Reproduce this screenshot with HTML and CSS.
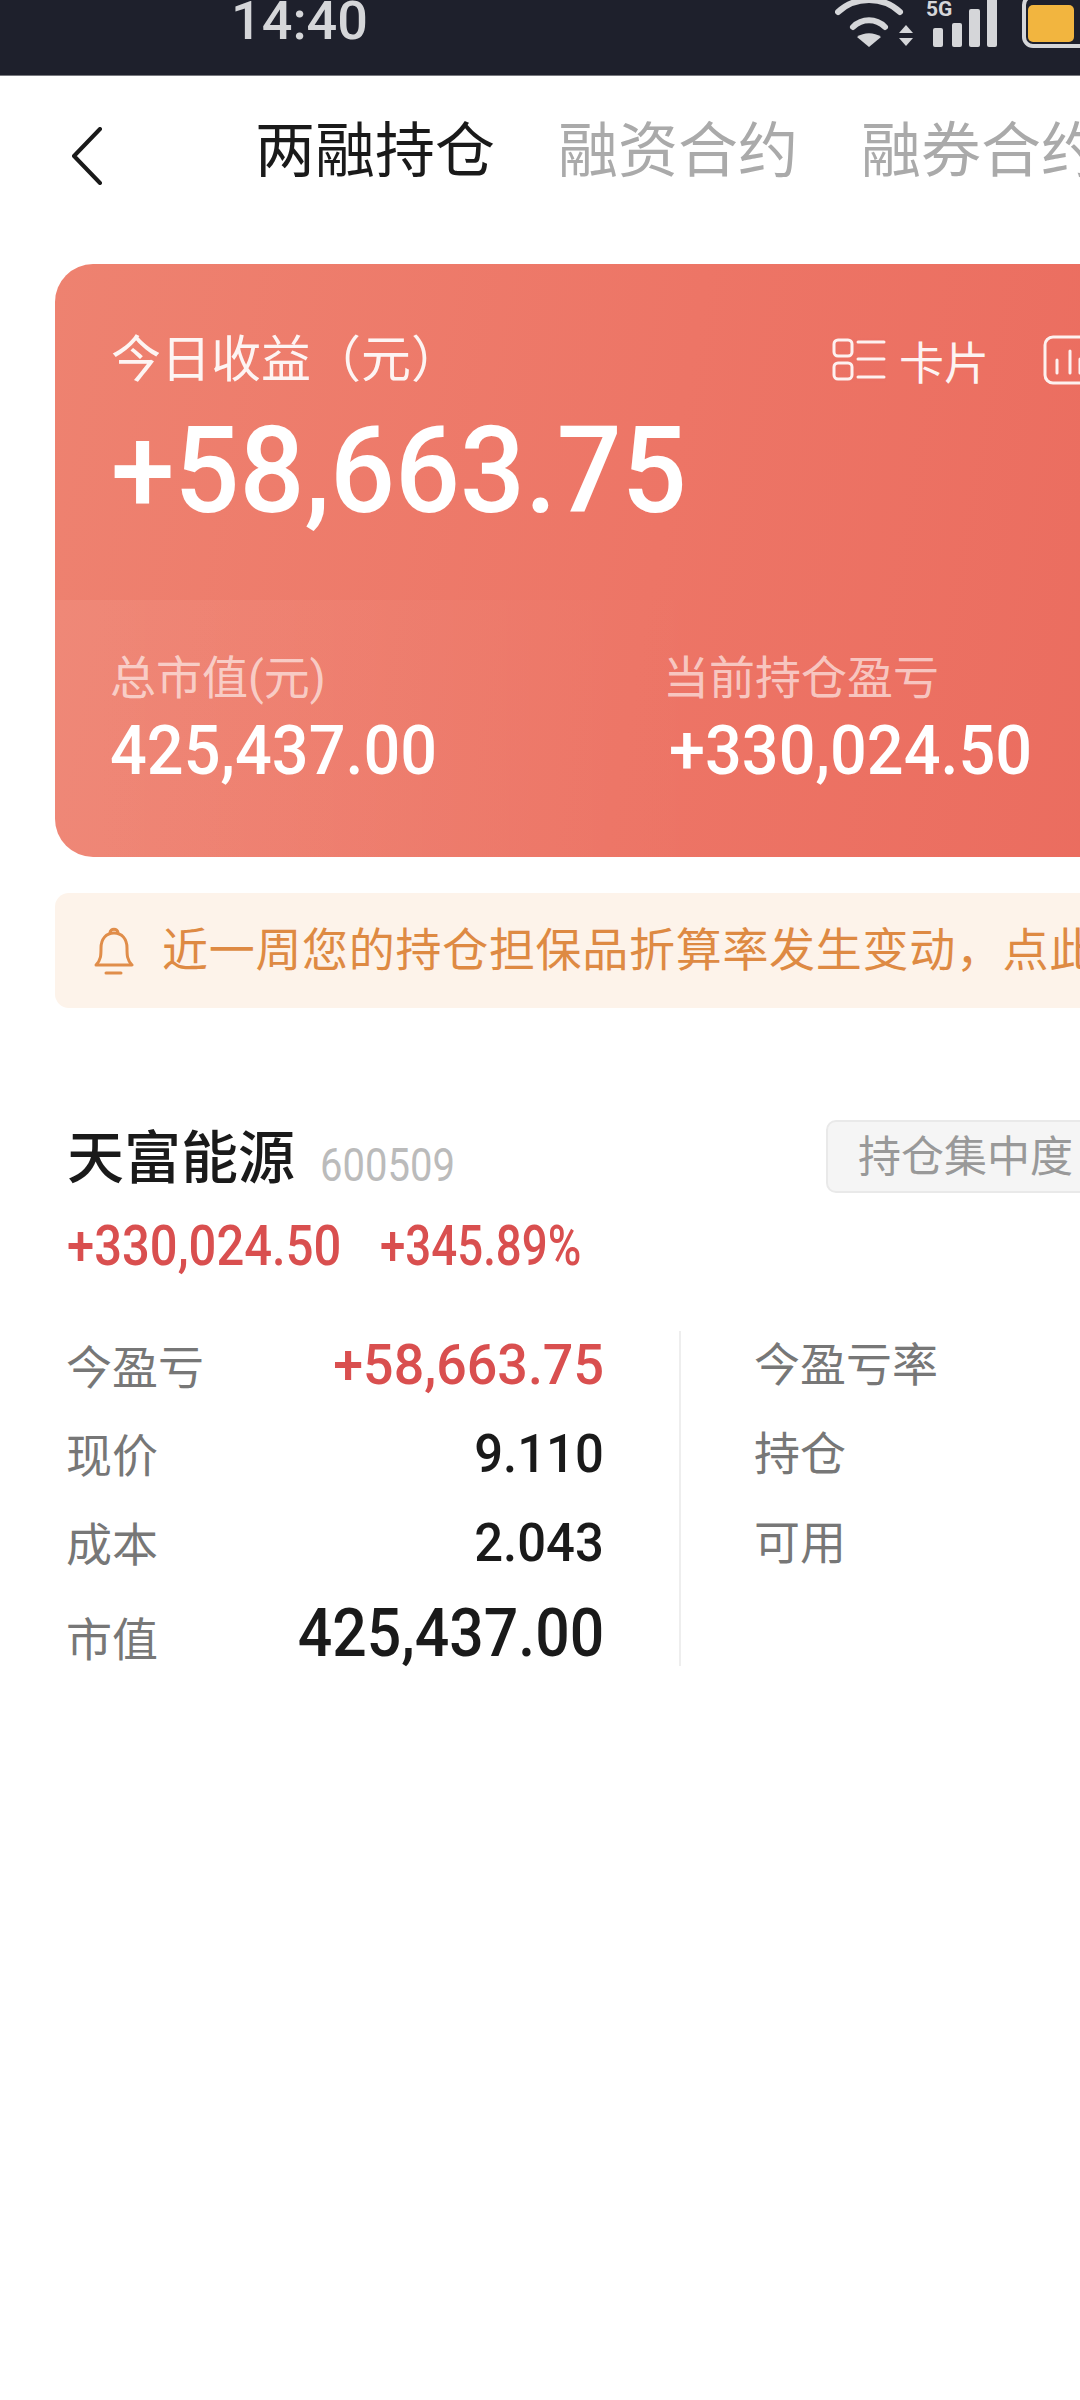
FILE: index.html
```html
<!DOCTYPE html>
<html lang="zh-CN">

<head>
    <meta charset="UTF-8">
    <meta name="viewport" content="width=device-width, initial-scale=1.0">
    <title>两融持仓</title>
    <link rel="stylesheet" href="styles.css">
</head>

<body>
    <!-- Status bar -->
    <div class="status-bar">
        <span class="time">14:40</span>
        <svg class="status-icons" width="245" height="48" viewBox="0 0 245 48">
            <g fill="none" stroke="#d5d6d9" stroke-width="6" stroke-linecap="round">
                <path d="M3 12 C20 -4 48 -4 65 12"/>
                <path d="M18 27 C27 18 41 18 50 27"/>
            </g>
            <path d="M34 47 L22 37 C29 32 39 32 46 37 Z" fill="#d5d6d9"/>
            <path d="M64 33 L71 25 L78 33 Z M64 38 L78 38 L71 46 Z" fill="#d5d6d9"/>
            <text x="91" y="16" class="five-g">5G</text>
            <g fill="#d5d6d9">
                <rect x="98" y="28" width="10" height="19" rx="2"/>
                <rect x="117" y="23" width="10" height="24" rx="2"/>
                <rect x="134" y="9" width="11" height="38" rx="2"/>
                <rect x="152" y="-2" width="10" height="49" rx="2"/>
            </g>
            <rect x="189" y="-4" width="70" height="50" rx="9" fill="none" stroke="#d5d6d9" stroke-width="4"/>
            <rect x="193" y="5" width="46" height="37" rx="5" fill="#f2b53f"/>
        </svg>
    </div>

    <!-- Tabs -->
    <div class="nav">
        <svg class="back" width="32" height="58" viewBox="0 0 32 58">
            <path d="M29 2 L3 29 L29 56" fill="none" stroke="#1a1a1a" stroke-width="4" stroke-linecap="round" stroke-linejoin="round"/>
        </svg>
        <div class="tabs">
            <span class="tab active">两融持仓</span>
            <span class="tab">融资合约</span>
            <span class="tab">融券合约</span>
        </div>
    </div>

    <!-- Summary card -->
    <div class="card">
        <div class="card-top">
            <div class="card-head">
                <span class="today-label">今日收益（元）</span>
                <div class="card-tools">
                    <svg class="tool-icon" width="54" height="44" viewBox="0 0 54 44">
                        <g fill="none" stroke="#fff" stroke-width="3" opacity="0.9">
                            <rect x="2" y="2" width="18" height="16" rx="4"/>
                            <rect x="2" y="25" width="18" height="16" rx="4"/>
                            <path d="M26 4 H52 M26 21 H52 M26 39 H52" stroke-linecap="round"/>
                        </g>
                    </svg>
                    <span class="tool-text">卡片</span>
                    <svg class="tool-icon chart-icon" width="60" height="50" viewBox="0 0 60 50">
                        <rect x="2" y="2" width="70" height="46" rx="8" fill="none" stroke="#fff" stroke-width="3" opacity="0.9"/>
                        <path d="M14 25 V38 M27 16 V38 M37 24 V38" stroke="#fff" stroke-width="3" stroke-linecap="round" opacity="0.9"/>
                    </svg>
                </div>
            </div>
            <div class="today-value">+58,663.75</div>
        </div>
        <div class="card-bottom">
            <div class="metric metric-first">
                <div class="metric-label">总市值(元)</div>
                <div class="metric-value">425,437.00</div>
            </div>
            <div class="metric">
                <div class="metric-label">当前持仓盈亏</div>
                <div class="metric-value metric-offset">+330,024.50</div>
            </div>
        </div>
    </div>

    <!-- Notice -->
    <div class="notice">
        <svg class="bell" width="40" height="48" viewBox="0 0 40 48">
            <g fill="none" stroke="#e08d4a" stroke-width="3" stroke-linecap="round" stroke-linejoin="round">
                <path d="M2 38 C7 33 7 28 7 21 C7 12 12 6 20 6 C28 6 33 12 33 21 C33 28 33 33 38 38 Z"/>
                <path d="M16 6 C16 1 24 1 24 6"/>
                <path d="M12 46 H27"/>
            </g>
        </svg>
        <span class="notice-text">近一周您的持仓担保品折算率发生变动，点此</span>
    </div>

    <!-- Position -->
    <div class="stock">
        <div class="stock-head">
            <span class="stock-name">天富能源</span>
            <span class="stock-code">600509</span>
            <span class="stock-btn">持仓集中度</span>
        </div>
        <div class="stock-profit">
            <span class="profit-amount">+330,024.50</span>
            <span class="profit-rate">+345.89%</span>
        </div>
        <div class="stats">
            <div class="stats-left">
                <div class="stat-row">
                    <span class="stat-label">今盈亏</span>
                    <span class="stat-value red">+58,663.75</span>
                </div>
                <div class="stat-row">
                    <span class="stat-label">现价</span>
                    <span class="stat-value">9.110</span>
                </div>
                <div class="stat-row">
                    <span class="stat-label">成本</span>
                    <span class="stat-value">2.043</span>
                </div>
                <div class="stat-row stat-last">
                    <span class="stat-label">市值</span>
                    <span class="stat-value big">425,437.00</span>
                </div>
            </div>
            <div class="stats-right">
                <div class="stat-row"><span class="stat-label">今盈亏率</span></div>
                <div class="stat-row"><span class="stat-label">持仓</span></div>
                <div class="stat-row"><span class="stat-label">可用</span></div>
            </div>
        </div>
    </div>
</body>

</html>
```

FILE: styles.css
```css
html, body {
    margin: 0;
    width: 1080px;
    height: 2400px;
    overflow: hidden;
    background-color: #fff;
}

body {
    font-family: Roboto, "Noto Sans CJK SC", sans-serif;
    color: #1a1a1a;
}

.status-bar {
    display: flex;
    justify-content: space-between;
    height: 75px;
    background-color: #1e202c;
    border-bottom: 1px solid #77787e;
}

.time {
    margin-left: 231px;
    font-size: 54px;
    font-weight: 500;
    line-height: 42px;
    color: #d5d6d9;
}

.status-icons {
    flex: none;
}

.five-g {
    font-family: Roboto, sans-serif;
    font-size: 21px;
    font-weight: 700;
    fill: #d5d6d9;
}

.nav {
    display: flex;
    height: 188px;
    box-sizing: border-box;
    padding-top: 46px;
    padding-left: 71px;
}

.back {
    flex: none;
    margin-top: 5px;
}

.tabs {
    display: flex;
    gap: 63px;
    margin-left: 152px;
    white-space: nowrap;
}

.tab {
    font-size: 60px;
    line-height: 60px;
    color: #aaa;
}

.tab.active {
    color: #1a1a1a;
}

.card {
    width: 1200px;
    height: 593px;
    margin-left: 55px;
    border-radius: 38px;
    overflow: hidden;
    background: linear-gradient(100deg, #ee8270 0%, #ed7566 50%, #ea6a5d 100%);
}

.card-top {
    height: 336px;
    box-sizing: border-box;
    padding: 66px 0 0 56px;
    color: #fff;
}

.card-head {
    display: flex;
    align-items: center;
    height: 60px;
}

.today-label {
    width: 721px;
    flex: none;
    font-size: 50px;
    line-height: 60px;
    opacity: 0.92;
}

.card-tools {
    display: flex;
    align-items: center;
}

.tool-icon {
    flex: none;
}

.tool-text {
    margin-left: 13px;
    font-size: 45px;
    white-space: nowrap;
    opacity: 0.92;
}

.chart-icon {
    margin-left: 54px;
}

.today-value {
    margin-top: 16px;
    font-size: 120px;
    font-weight: 500;
    line-height: 130px;
    white-space: nowrap;
    transform: scaleX(0.953);
    transform-origin: left;
}

.card-bottom {
    display: flex;
    height: 257px;
    box-sizing: border-box;
    padding-top: 51px;
    background: linear-gradient(90deg, rgba(255, 255, 255, 0.06) 0%, rgba(255, 255, 255, 0) 55%);
}

.metric-first {
    width: 608px;
    flex: none;
    padding-left: 55px;
    box-sizing: border-box;
}

.metric-label {
    font-size: 46px;
    line-height: 54px;
    color: rgba(255, 255, 255, 0.62);
}

.metric-value {
    margin-top: 10px;
    font-size: 68px;
    font-weight: 500;
    line-height: 72px;
    color: #fff;
    white-space: nowrap;
    transform: scaleX(0.953);
    transform-origin: left;
}

.metric-offset {
    margin-left: 6px;
}

.notice {
    display: flex;
    align-items: center;
    width: 1200px;
    height: 115px;
    box-sizing: border-box;
    margin: 36px 0 0 55px;
    padding-left: 39px;
    background-color: #fdf3ea;
    border-radius: 14px;
}

.bell {
    flex: none;
}

.notice-text {
    margin-left: 28px;
    margin-bottom: 10px;
    font-size: 46px;
    letter-spacing: 0.7px;
    color: #de8a43;
    white-space: nowrap;
}

.stock {
    margin-top: 110px;
    padding-left: 67px;
}

.stock-head {
    display: flex;
    align-items: flex-end;
    width: 1200px;
    height: 75px;
}

.stock-name {
    flex: none;
    font-size: 57px;
    font-weight: 500;
    line-height: 68px;
    white-space: nowrap;
}

.stock-code {
    flex: none;
    width: 506px;
    margin-left: 25px;
    font-size: 46px;
    line-height: 56px;
    color: #bbb;
    transform: scaleX(0.87);
    transform-origin: left;
}

.stock-btn {
    display: flex;
    align-items: center;
    box-sizing: border-box;
    flex: none;
    width: 300px;
    height: 73px;
    padding-left: 30px;
    padding-bottom: 8px;
    font-size: 43px;
    white-space: nowrap;
    color: #999;
    background-color: #f5f5f5;
    border: 2px solid #e9e9e9;
    border-radius: 10px;
}

.stock-profit {
    display: flex;
    margin-top: 23px;
    font-size: 55px;
    font-weight: 500;
    line-height: 60px;
    color: #d94f4f;
}

.profit-amount {
    transform: scaleX(0.89);
    transform-origin: left;
}

.profit-rate {
    margin-left: 5px;
    transform: scaleX(0.83);
    transform-origin: left;
}

.stats {
    display: flex;
    margin-top: 55px;
    margin-left: -1px;
}

.stats-left {
    width: 538px;
    padding-right: 75px;
    padding-top: 4px;
    border-right: 2px solid #eee;
    height: 331px;
}

.stats-right {
    padding-left: 73px;
    padding-top: 4px;
}

.stat-row {
    display: flex;
    justify-content: space-between;
    align-items: baseline;
    height: 89px;
}

.stat-last {
    height: 74px;
    margin-top: 2px;
}

.stat-label {
    font-size: 46px;
    line-height: 60px;
    color: #777;
}

.stat-value {
    font-size: 54px;
    font-weight: 500;
    line-height: 60px;
    color: #1a1a1a;
    transform: scaleX(0.94);
    transform-origin: right;
}

.stat-value.red {
    font-size: 56px;
    color: #d94f4f;
    transform: scaleX(0.96);
}

.stat-value.big {
    font-size: 66px;
    transform: scaleX(0.92);
}
```
